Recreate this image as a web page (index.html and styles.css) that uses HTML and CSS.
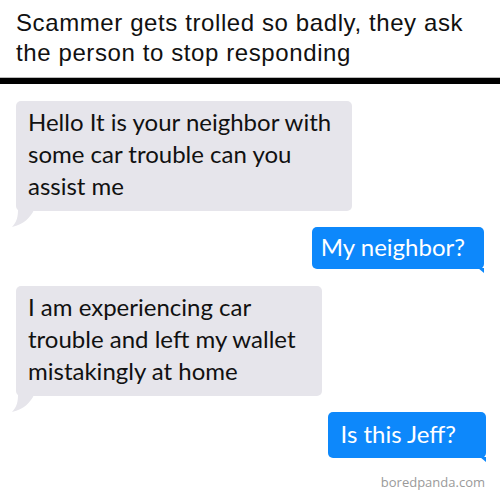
FILE: index.html
```html
<!DOCTYPE html>
<html lang="en">
<head>
    <meta charset="UTF-8">
    <title>Scammer gets trolled</title>
    <link rel="stylesheet" href="styles.css">
</head>
<body>
    <div class="post">
        <div class="title">
            <h1>Scammer gets trolled so badly, they ask the person to stop responding</h1>
        </div>
        <div class="chat">
            <div class="msg in first">Hello It is your neighbor with some car trouble can you assist me</div>
            <div class="msg out second">My neighbor?</div>
            <div class="msg in third">I am experiencing car trouble and left my wallet mistakingly at home</div>
            <div class="msg out fourth">Is this Jeff?</div>
        </div>
        <div class="credit">boredpanda.com</div>
    </div>
</body>
</html>
```

FILE: styles.css
```css
body {
    margin: 0;
    background: #fff;
}
.post {
    width: 500px;
    height: 500px;
    overflow: hidden;
    display: flex;
    flex-direction: column;
}
.title {
    padding: 8px 16px 10px;
    border-bottom: 6px solid #000;
    box-shadow: 0 -1px 0 #bbb inset;
}
.title h1 {
    margin: 0;
    font-family: "Liberation Sans", Arial, sans-serif;
    font-weight: normal;
    font-size: 24px;
    letter-spacing: 0.6px;
    line-height: 30px;
    color: #111;
}
.chat {
    display: flex;
    flex-direction: column;
    padding: 0 16px;
}
.msg {
    position: relative;
    font-family: Lato, sans-serif;
    font-size: 24px;
    line-height: 32px;
    border-radius: 5px;
}
.msg.in {
    align-self: flex-start;
    background: #e6e5eb;
    color: #111;
    padding: 5px 14px 9px 12px;
}
.msg.in::after {
    content: "";
    position: absolute;
    left: -4px;
    bottom: -17px;
    width: 22px;
    height: 18px;
    background: #e6e5eb;
    clip-path: path("M6 0 L22 0 C18 8 12 14 0 17 C5 12 6 6 6 0 Z");
}
.msg.out {
    align-self: flex-end;
    background: #0d88fb;
    color: #fff;
    padding: 4px 19px 6px 9px;
}
.msg.out::after {
    content: "";
    position: absolute;
    right: 0;
    bottom: -4px;
    width: 6px;
    height: 5px;
    background: #0d88fb;
    clip-path: polygon(0 0, 100% 0, 100% 100%);
}
.first {
    margin-top: 17px;
    width: 310px;
}
.second {
    margin-top: 16px;
}
.third {
    margin-top: 17px;
    width: 280px;
}
.msg.fourth {
    margin-top: 16px;
    margin-right: -2px;
    padding: 6px 30px 8px 13px;
}
.credit {
    align-self: flex-end;
    margin: 16px 15px 0 0;
    font-family: "Open Sans", sans-serif;
    font-size: 13px;
    line-height: 16px;
    color: #9a9a9a;
}
```
